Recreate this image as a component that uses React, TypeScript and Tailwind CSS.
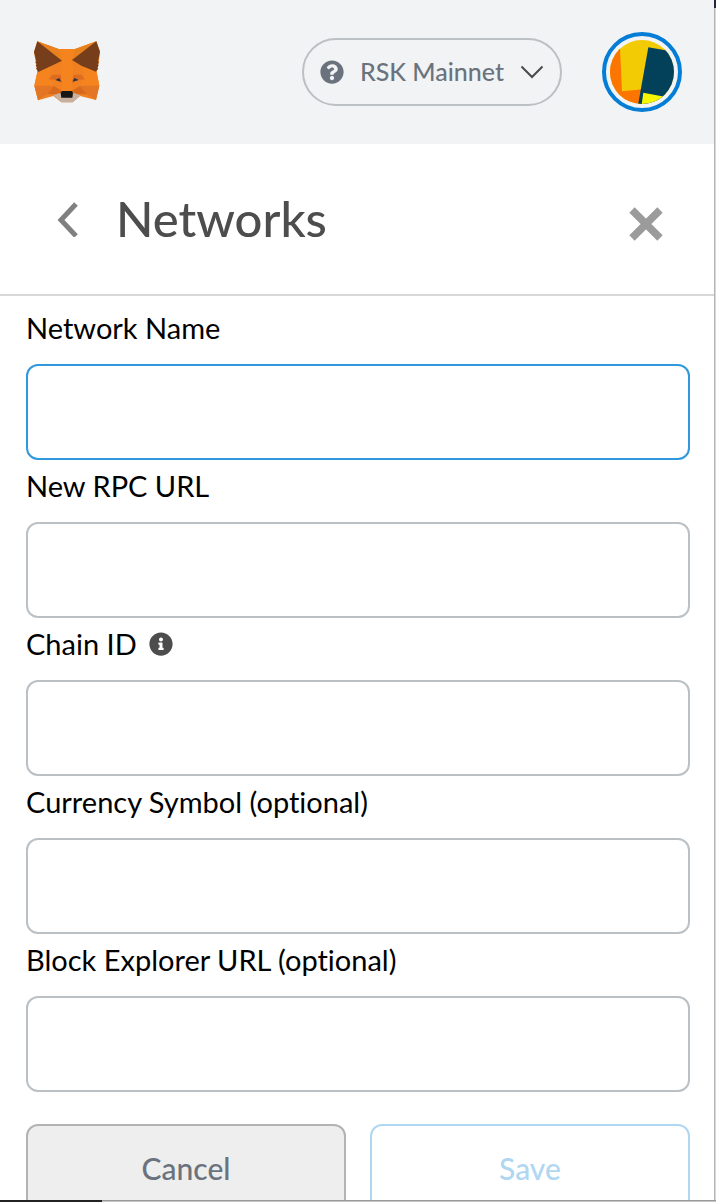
import React, { useState } from "react";
import { FaInfoCircle, FaQuestionCircle } from "react-icons/fa";

interface Field {
  id: string;
  label: string;
  info?: boolean;
}

const fields: Field[] = [
  { id: "networkName", label: "Network Name" },
  { id: "rpcUrl", label: "New RPC URL" },
  { id: "chainId", label: "Chain ID", info: true },
  { id: "symbol", label: "Currency Symbol (optional)" },
  { id: "explorerUrl", label: "Block Explorer URL (optional)" },
];

function FoxLogo() {
  return (
    <svg viewBox="39 33 204 189" className="h-[63px] w-[68px]" aria-hidden="true">
      {/* head */}
      <path d="M52 34 L116 57 H165 L229 34 L240 65 L236 100 L230 126 L238 167 L228 210 L180 198 L158 217 H124 L100 198 L54 211 L43 167 L52 126 L42 66 Z" fill="#f08021" />
      <path d="M52 34 L116 57 L126 92 Z" fill="#e8821e" />
      <path d="M229 34 L165 57 L156 90 Z" fill="#e8821e" />
      <path d="M116 57 H165 L156 90 L160 135 L154 184 H126 L122 135 L126 92 Z" fill="#f5841f" />
      <path d="M52 126 L98 106 L86 137 L102 168 L43 167 Z" fill="#f5841f" />
      <path d="M230 126 L184 106 L194 137 L180 168 L238 167 Z" fill="#f5841f" />
      {/* ears */}
      <path d="M52 34 L126 92 L98 106 L55 126 L48 115 L51 113 L47 106 L50 103 L46 97 L49 94 L42 66 Z" fill="#763e1a" />
      <path d="M229 34 L156 90 L184 107 L228 125 L235 115 L232 113 L236 106 L233 103 L237 97 L234 94 L240 65 Z" fill="#763e1a" />
      {/* cheeks */}
      <path d="M43 167 H102 L81 193 L54 211 Z" fill="#e27625" />
      <path d="M238 167 H180 L201 193 L228 210 Z" fill="#e27625" />
      <path d="M102 168 L126 184 L122 192 L81 193 Z" fill="#d7681c" />
      <path d="M180 168 L154 184 L160 192 L201 193 Z" fill="#d7681c" />
      {/* brows and eyes */}
      <path d="M98 134 H122 L126 158 L105 149 L86 148 Z" fill="#dd6c20" />
      <path d="M184 134 H160 L156 158 L176 149 L194 148 Z" fill="#dd6c20" />
      <path d="M106 150 L118 144 L123 155 Z" fill="#233447" />
      <path d="M176 150 L163 144 L158 155 Z" fill="#233447" />
      {/* muzzle */}
      <path d="M100 196 L122 188 L125 202 H156 L160 188 L182 196 L158 217 H124 Z" fill="#c8b0a0" />
      <path d="M126 183 H155 L159 188 L157 203 H124 L122 188 Z" fill="#161616" />
    </svg>
  );
}

function AccountIcon() {
  return (
    <svg viewBox="60 59 192 192" className="size-16 rounded-full" aria-hidden="true">
      <rect x="60" y="59" width="192" height="192" fill="#f2cb05" />
      <path d="M40 59 H89 L96 213 L160 207 V260 H40 Z" fill="#fc7500" />
      <path d="M175 81 L260 96 V260 H143 Z" fill="#03415a" />
      <path d="M160 217 L240 232 V260 H154 Z" fill="#f7f704" />
    </svg>
  );
}

export default function App() {
  const [values, setValues] = useState<Record<string, string>>({});
  const [active, setActive] = useState("networkName");

  const changeHandler = (event: React.ChangeEvent<HTMLInputElement>) => {
    const { id, value } = event.target;
    setValues((prev) => ({ ...prev, [id]: value }));
  };

  return (
    <div className="flex h-screen flex-col overflow-hidden bg-white font-['Lato',sans-serif] [font-variant-ligatures:none]">
      <div className="flex min-h-0 flex-1">
        <div className="min-w-0 flex-1 overflow-hidden">
          <header className="flex h-36 items-center bg-[#f2f3f4] pr-8 pl-[33px]">
            <a href="#home" aria-label="Home">
              <FoxLogo />
            </a>
            <button
              type="button"
              className="ml-auto flex h-[68px] w-[260px] items-center justify-between rounded-full border-2 border-[#bbc0c5] px-4 text-[25px] font-medium text-[#6a737d]"
            >
              <FaQuestionCircle className="size-6" />
              RSK Mainnet
              <svg viewBox="0 0 24 14" className="h-3.5 w-6" fill="none" stroke="#4a4a4a" strokeWidth="2">
                <path d="M1.5 1.5 L12 12 L22.5 1.5" />
              </svg>
            </button>
            <button
              type="button"
              aria-label="Account"
              className="ml-10 size-20 rounded-full border-4 border-[#037dd6] p-1"
            >
              <AccountIcon />
            </button>
          </header>

          <div className="flex h-[152px] items-center border-b-2 border-[#d8d8d8] pr-[51px] pl-14">
            <button type="button" aria-label="Back">
              <svg viewBox="0 0 24 36" className="h-9 w-6" fill="none" stroke="#808080" strokeWidth="5">
                <path d="M20 3 L5 19 L20 35" />
              </svg>
            </button>
            <h1 className="ml-9 text-[49px] font-medium text-[#4d4d4d]">Networks</h1>
            <button type="button" aria-label="Close" className="mt-2.5 ml-auto">
              <svg viewBox="0 0 34 34" className="size-[34px]" stroke="#9b9b9b" strokeWidth="7.5">
                <path d="M3 3 L31 31 M31 3 L3 31" />
              </svg>
            </button>
          </div>

          <form className="pt-1.5 pr-6 pl-[26px]">
            {fields.map((field) => (
              <div key={field.id}>
                <div className="flex h-[62px] items-center pb-2.5 text-[29px] text-black">
                  <label htmlFor={field.id}>{field.label}</label>
                  {field.info && <FaInfoCircle className="ml-3 size-6 text-[#4d4d4d]" />}
                </div>
                <input
                  id={field.id}
                  type="text"
                  value={values[field.id] ?? ""}
                  onChange={changeHandler}
                  onFocus={() => setActive(field.id)}
                  className={`block h-24 w-full rounded-xl border-2 px-5 text-[29px] outline-none ${
                    active === field.id ? "border-[#3098dc]" : "border-[#bbc0c5]"
                  }`}
                />
              </div>
            ))}
            <div className="mt-8 flex gap-6 text-[30px] font-medium">
              <button
                type="button"
                className="h-[88px] flex-1 rounded-xl border-2 border-[#b3b3b3] bg-[#eee] text-[#6a737d]"
              >
                Cancel
              </button>
              <button
                type="submit"
                disabled
                className="h-[88px] flex-1 rounded-xl border-2 border-[#b0d7f2] bg-white text-[#b0d7f2]"
              >
                Save
              </button>
            </div>
          </form>
        </div>
        <div className="w-0.5 border-l border-[#b4b4b4] bg-[#d8d8d8]">
          <div className="-ml-px h-2 w-0.5 bg-[#24243e]" />
        </div>
      </div>
      <div className="h-0.5 shrink-0 border-t border-[#9a9a9a] bg-[#c4c4c4]">
        <div className="-mt-px h-0.5 w-[102px] bg-[#222]" />
      </div>
    </div>
  );
}
